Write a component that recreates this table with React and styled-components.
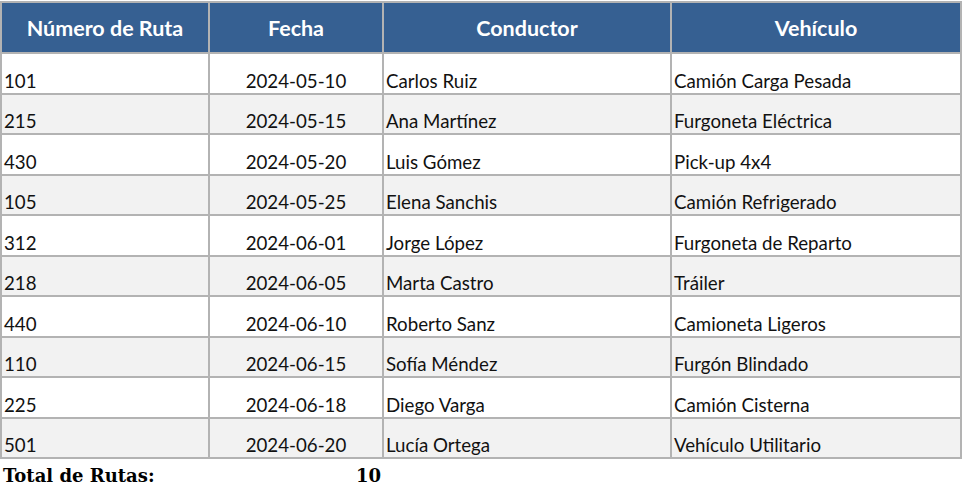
import styled, { createGlobalStyle } from 'styled-components'

const GlobalStyle = createGlobalStyle`
  body {
    margin: 0;
    background: #ffffff;
  }
`

const rutas = [
  { numero: '101', fecha: '2024-05-10', conductor: 'Carlos Ruiz', vehiculo: 'Camión Carga Pesada' },
  { numero: '215', fecha: '2024-05-15', conductor: 'Ana Martínez', vehiculo: 'Furgoneta Eléctrica' },
  { numero: '430', fecha: '2024-05-20', conductor: 'Luis Gómez', vehiculo: 'Pick-up 4x4' },
  { numero: '105', fecha: '2024-05-25', conductor: 'Elena Sanchis', vehiculo: 'Camión Refrigerado' },
  { numero: '312', fecha: '2024-06-01', conductor: 'Jorge López', vehiculo: 'Furgoneta de Reparto' },
  { numero: '218', fecha: '2024-06-05', conductor: 'Marta Castro', vehiculo: 'Tráiler' },
  { numero: '440', fecha: '2024-06-10', conductor: 'Roberto Sanz', vehiculo: 'Camioneta Ligeros' },
  { numero: '110', fecha: '2024-06-15', conductor: 'Sofía Méndez', vehiculo: 'Furgón Blindado' },
  { numero: '225', fecha: '2024-06-18', conductor: 'Diego Varga', vehiculo: 'Camión Cisterna' },
  { numero: '501', fecha: '2024-06-20', conductor: 'Lucía Ortega', vehiculo: 'Vehículo Utilitario' },
]

const Sheet = styled.table`
  border-collapse: collapse;
  table-layout: fixed;
  width: 960px;
  margin-top: 1px;
  font-family: Lato, 'Liberation Sans', sans-serif;
`

const HeadCell = styled.th`
  height: 49px;
  padding: 0 2px;
  background: #366092;
  color: #ffffff;
  font-size: 21.5px;
  font-weight: 700;
  text-align: center;
  vertical-align: middle;
  border: 2px solid #b3b3b3;
  white-space: nowrap;
`

const Row = styled.tr`
  height: 40.5px;
  background: ${(p) => (p.$alt ? '#f2f2f2' : '#ffffff')};
`

const Cell = styled.td`
  padding: 0 2px 1px 2px;
  font-size: 18.7px;
  line-height: 22px;
  color: #111111;
  text-align: ${(p) => (p.$center ? 'center' : 'left')};
  vertical-align: bottom;
  border: 2px solid #b3b3b3;
  white-space: nowrap;
`

const TotalRow = styled.tr`
  height: 24px;
`

const TotalCell = styled.td`
  padding: 6px 2px 0 2px;
  font-family: 'DejaVu Serif', serif;
  font-size: 18px;
  font-weight: 700;
  color: #000000;
  text-align: ${(p) => (p.$right ? 'right' : 'left')};
  vertical-align: bottom;
  border: none;
  white-space: nowrap;
`

const App = () => {
  return (
    <>
      <GlobalStyle />
      <Sheet>
        <colgroup>
          <col style={{ width: 208 }} />
          <col style={{ width: 174 }} />
          <col style={{ width: 288 }} />
          <col style={{ width: 290 }} />
        </colgroup>
        <thead>
          <tr>
            <HeadCell>Número de Ruta</HeadCell>
            <HeadCell>Fecha</HeadCell>
            <HeadCell>Conductor</HeadCell>
            <HeadCell>Vehículo</HeadCell>
          </tr>
        </thead>
        <tbody>
          {rutas.map((r, i) => (
            <Row key={r.numero} $alt={i % 2 === 1}>
              <Cell>{r.numero}</Cell>
              <Cell $center>{r.fecha}</Cell>
              <Cell>{r.conductor}</Cell>
              <Cell>{r.vehiculo}</Cell>
            </Row>
          ))}
        </tbody>
        <tfoot>
          <TotalRow>
            <TotalCell>Total de Rutas:</TotalCell>
            <TotalCell $right>{rutas.length}</TotalCell>
            <TotalCell />
            <TotalCell />
          </TotalRow>
        </tfoot>
      </Sheet>
    </>
  )
}

export default App
